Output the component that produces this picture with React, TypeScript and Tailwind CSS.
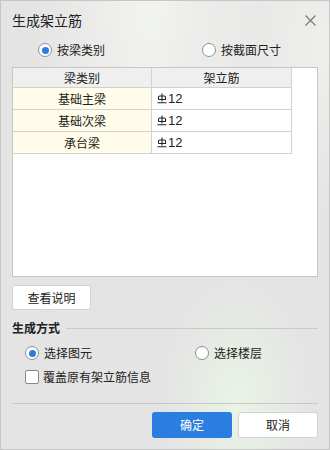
import { useState } from "react";

const beamTypes = ["基础主梁", "基础次梁", "承台梁"];

// 钢筋等级符号（三级钢）
const RebarMark = () => (
  <svg width="10" height="11" viewBox="0 0 10 11" className="mr-[1px] shrink-0">
    <path d="M5 0.5V8.5M1.5 6.5V4.2Q1.5 3 2.7 3H7.3Q8.5 3 8.5 4.2V6.5H1.5M0.5 9.8H9.5" fill="none" stroke="#222" strokeWidth="1.1" />
  </svg>
);

const Radio = ({ checked, label, onClick }: { checked: boolean; label: string; onClick: () => void }) => (
  <button type="button" onClick={onClick} className="flex items-center gap-[5px] text-[12px] text-[#222]">
    <span className="flex h-[14px] w-[14px] items-center justify-center rounded-full border border-[#8f8f8f] bg-white">
      {checked && <span className="h-[7px] w-[7px] rounded-full bg-[#2b7de0]" />}
    </span>
    <span>{label}</span>
  </button>
);

export default function App() {
  const [byType, setByType] = useState(true);
  const [byElement, setByElement] = useState(true);
  const [overwrite, setOverwrite] = useState(false);

  return (
    <div
      className="flex h-[450px] w-[330px] flex-col border border-[#c6c6c6] bg-[#e4e4e4] bg-[radial-gradient(ellipse_at_45%_0%,#f2f4f0_0%,transparent_45%),radial-gradient(ellipse_at_72%_90%,#e9f4e6_0%,transparent_22%),radial-gradient(ellipse_at_100%_10%,#eef0ec_0%,transparent_30%)] px-[11px] text-[#222]"
      style={{ fontFamily: '"Noto Sans CJK SC", "Noto Sans", sans-serif' }}
    >
      {/* 标题栏 */}
      <div className="flex h-[38px] shrink-0 items-center justify-between">
        <span className="text-[14px]">生成架立筋</span>
        <svg width="11" height="11" viewBox="0 0 11 11" className="mr-[2px]">
          <path d="M0.5 0.5L10.5 10.5M10.5 0.5L0.5 10.5" stroke="#7a7a7a" strokeWidth="1.2" />
        </svg>
      </div>

      {/* 分类方式 */}
      <div className="flex h-[22px] shrink-0 items-center">
        <div className="ml-[26px] w-[164px]">
          <Radio checked={byType} label="按梁类别" onClick={() => setByType(true)} />
        </div>
        <Radio checked={!byType} label="按截面尺寸" onClick={() => setByType(false)} />
      </div>

      {/* 表格 */}
      <div className="mt-[6px] h-[210px] shrink-0 border border-[#c6c6c6] bg-white">
        <div className="grid w-[279px] grid-cols-[139px_140px] text-[12px]">
          <div className="flex h-[20px] items-center justify-center border-r border-b border-[#d2d2d2] bg-[#efefef]">梁类别</div>
          <div className="flex h-[20px] items-center justify-center border-r border-b border-[#d2d2d2] bg-[#efefef]">架立筋</div>
          {beamTypes.map((t) => (
            <div key={t} className="contents">
              <div className="flex h-[22px] items-center justify-center border-r border-b border-[#d2d2d2] bg-[#fffde9]">{t}</div>
              <div className="flex h-[22px] items-center border-r border-b border-[#d2d2d2] pl-[5px]">
                <RebarMark />
                <span className="text-[13px] leading-none" style={{ fontFamily: '"Liberation Sans", sans-serif' }}>12</span>
              </div>
            </div>
          ))}
        </div>
      </div>

      <button type="button" className="mt-[8px] h-[25px] w-[79px] shrink-0 rounded-[3px] border border-[#d3d3d3] bg-white text-[12px]">
        查看说明
      </button>

      {/* 生成方式 */}
      <div className="mt-[8px] flex h-[20px] shrink-0 items-center gap-[6px]">
        <span className="text-[12px] font-bold">生成方式</span>
        <div className="h-px flex-1 bg-[#cacaca]" />
      </div>

      <div className="mt-[4px] flex h-[22px] shrink-0 items-center pl-[13px]">
        <div className="w-[170px]">
          <Radio checked={byElement} label="选择图元" onClick={() => setByElement(true)} />
        </div>
        <Radio checked={!byElement} label="选择楼层" onClick={() => setByElement(false)} />
      </div>

      <button
        type="button"
        onClick={() => setOverwrite(!overwrite)}
        className="mt-[2px] flex h-[22px] shrink-0 items-center gap-[4px] pl-[13px] text-[12px]"
      >
        <span className="flex h-[14px] w-[14px] items-center justify-center rounded-[2px] border border-[#8a8a8a] bg-white">
          {overwrite && <span className="h-[6px] w-[6px] bg-[#2b7de0]" />}
        </span>
        <span>覆盖原有架立筋信息</span>
      </button>

      <div className="mt-[15px] h-px shrink-0 bg-[#c8c8c8]" />

      <div className="mt-[8px] flex shrink-0 justify-end gap-[6px]">
        <button type="button" className="h-[26px] w-[80px] rounded-[3px] bg-[#2b7de0] text-[12px] text-white">
          确定
        </button>
        <button type="button" className="h-[26px] w-[80px] rounded-[3px] border border-[#d3d3d3] bg-white text-[12px]">
          取消
        </button>
      </div>
    </div>
  );
}
